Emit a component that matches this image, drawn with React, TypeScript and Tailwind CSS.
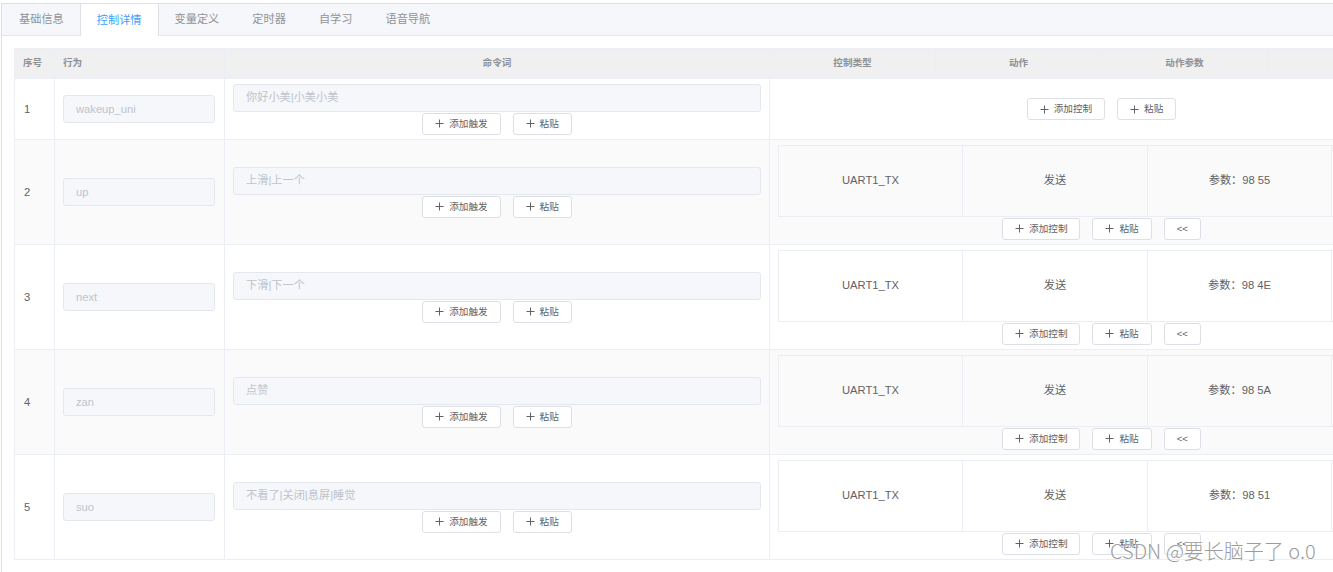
import type { ReactNode } from 'react'

const FONT = { fontFamily: '"Liberation Sans", "Noto Sans CJK SC", sans-serif' }

type Row = {
  id: number
  action: string
  words: string
  control?: { type: string; act: string; param: string }
}

const rows: Row[] = [
  { id: 1, action: 'wakeup_uni', words: '你好小美|小美小美' },
  { id: 2, action: 'up', words: '上滑|上一个', control: { type: 'UART1_TX', act: '发送', param: '参数：98 55' } },
  { id: 3, action: 'next', words: '下滑|下一个', control: { type: 'UART1_TX', act: '发送', param: '参数：98 4E' } },
  { id: 4, action: 'zan', words: '点赞', control: { type: 'UART1_TX', act: '发送', param: '参数：98 5A' } },
  { id: 5, action: 'suo', words: '不看了|关闭|息屏|睡觉', control: { type: 'UART1_TX', act: '发送', param: '参数：98 51' } },
]

const tabs = ['基础信息', '控制详情', '变量定义', '定时器', '自学习', '语音导航']

function PlusIcon() {
  return (
    <svg width="9" height="9" viewBox="0 0 9 9" className="shrink-0">
      <path d="M4.5 0.5v8M0.5 4.5h8" stroke="#606266" strokeWidth="1" fill="none" />
    </svg>
  )
}

function Btn({ children, plus = true }: { children: ReactNode; plus?: boolean }) {
  return (
    <button className="h-[22px] px-3 flex items-center gap-[5px] bg-white border border-[#dcdfe6] rounded-[3px] text-[9.6px] text-[#606266] leading-none">
      {plus && <PlusIcon />}
      {children}
    </button>
  )
}

function GrayInput({ value, className = '' }: { value: string; className?: string }) {
  return (
    <div
      className={`h-[28px] flex items-center px-3 bg-[#f5f7fa] border border-[#e4e7ed] rounded-[3px] text-[11.2px] text-[#c0c4cc] ${className}`}
    >
      {value}
    </div>
  )
}

export default function App() {
  return (
    <div className="w-screen h-screen overflow-hidden bg-white relative" style={FONT}>
      <div className="w-[1446px] ml-px mt-[3px] border border-[#dcdfe6] border-b-0 min-h-[600px]">
        {/* Tabs */}
        <div className="flex h-[32px] bg-[#f5f7fa] border-b border-[#e4e7ed]">
          {tabs.map((t, i) => (
            <div
              key={t}
              className={`px-4 flex items-center text-[11.2px] border-x ${i > 0 ? '-ml-px' : ''} ${
                i === 1
                  ? 'bg-white text-[#409eff] border-[#dcdfe6] h-[32px] relative z-10'
                  : 'text-[#909399] border-transparent'
              }`}
            >
              {t}
            </div>
          ))}
        </div>

        <div className="p-3">
          <table className="table-fixed border-collapse w-[1419px] text-[11.2px] text-[#606266]">
            <colgroup>
              <col className="w-[40px]" />
              <col className="w-[170px]" />
              <col className="w-[545px]" />
              <col className="w-[166px]" />
              <col className="w-[166px]" />
              <col className="w-[166px]" />
              <col className="w-[166px]" />
            </colgroup>
            <thead>
              <tr className="h-[30px] bg-[#f0f0f0] text-[9.6px] font-bold text-[#8d9095]">
                <th className="border border-[#ebeef5] text-left pl-2 font-bold">序号</th>
                <th className="border border-[#ebeef5] text-left pl-2 font-bold">行为</th>
                <th className="border border-[#ebeef5] font-bold">命令词</th>
                <th className="border border-[#ebeef5] font-bold">控制类型</th>
                <th className="border border-[#ebeef5] font-bold">动作</th>
                <th className="border border-[#ebeef5] font-bold">动作参数</th>
                <th className="border border-[#ebeef5] font-bold"></th>
              </tr>
            </thead>
            <tbody>
              {rows.map((r, i) => (
                <tr key={r.id} className={`${i % 2 === 1 ? 'bg-[#fafafa]' : 'bg-white'} ${r.control ? 'h-[105px]' : 'h-[61px]'}`}>
                  <td className="border border-[#ebeef5] pl-[9px] align-middle">{r.id}</td>
                  <td className="border border-[#ebeef5] px-2 align-middle">
                    <GrayInput value={r.action} className="w-[152px]" />
                  </td>
                  <td className="border border-[#ebeef5] px-2 align-middle">
                    <GrayInput value={r.words} className="w-full" />
                    <div className="flex justify-center gap-3 mt-px">
                      <Btn>添加触发</Btn>
                      <Btn>粘贴</Btn>
                    </div>
                  </td>
                  <td colSpan={4} className="border border-[#ebeef5] px-2 align-middle">
                    {r.control ? (
                      <>
                        <table className="table-fixed border-collapse w-[648px]">
                          <colgroup>
                            <col className="w-[184px]" />
                            <col className="w-[185px]" />
                            <col className="w-[184px]" />
                            <col className="w-[95px]" />
                          </colgroup>
                          <tbody>
                            <tr className="h-[71px]">
                              <td className="border border-[#ebeef5] text-center">{r.control.type}</td>
                              <td className="border border-[#ebeef5] text-center">{r.control.act}</td>
                              <td className="border border-[#ebeef5] text-center">{r.control.param}</td>
                              <td className="border border-[#ebeef5]"></td>
                            </tr>
                          </tbody>
                        </table>
                        <div className="flex justify-center gap-3 mt-px">
                          <Btn>添加控制</Btn>
                          <Btn>粘贴</Btn>
                          <Btn plus={false}>&lt;&lt;</Btn>
                        </div>
                      </>
                    ) : (
                      <div className="flex justify-center gap-3">
                        <Btn>添加控制</Btn>
                        <Btn>粘贴</Btn>
                      </div>
                    )}
                  </td>
                </tr>
              ))}
            </tbody>
          </table>
        </div>
      </div>

      {/* watermark */}
      <div
        className="absolute left-[1110px] top-[536px] text-[20px] font-light text-[#9c9c9c] whitespace-nowrap pointer-events-none"
        style={{ fontFamily: '"Noto Sans CJK SC", "Liberation Sans", sans-serif', textShadow: '0 0 1px #fff, 0 0 1px #fff' }}
      >
        CSDN @要长脑子了 o.0
      </div>
    </div>
  )
}
